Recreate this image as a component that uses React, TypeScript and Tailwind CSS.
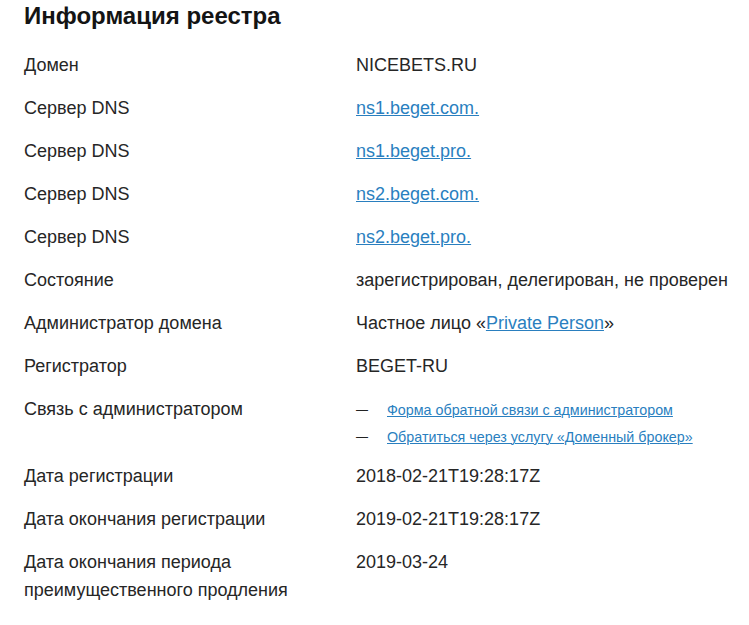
import React from "react";

const Row = ({ label, children, h = "h-[43px]" }: { label: React.ReactNode; children: React.ReactNode; h?: string }) => (
  <div className={`flex ${h}`}>
    <div className="w-[332px] shrink-0">{label}</div>
    <div className="flex-1 whitespace-nowrap">{children}</div>
  </div>
);

const L = ({ children }: { children: React.ReactNode }) => (
  <a className="text-[#2a7fbf] underline decoration-1 underline-offset-[1px]">{children}</a>
);

export default function App() {
  return (
    <div className="w-[749px] h-[625px] bg-white overflow-hidden pl-6 pt-0 text-[#262626] text-[18px] leading-[22px]" style={{ fontFamily: '"Liberation Sans", Arial, sans-serif' }}>
      <h1 className="text-[24px] font-bold leading-[30px] pt-[1px] text-[#141414] mb-[23px]">Информация реестра</h1>
      <Row label="Домен">NICEBETS.RU</Row>
      <Row label="Сервер DNS"><L>ns1.beget.com.</L></Row>
      <Row label="Сервер DNS"><L>ns1.beget.pro.</L></Row>
      <Row label="Сервер DNS"><L>ns2.beget.com.</L></Row>
      <Row label="Сервер DNS"><L>ns2.beget.pro.</L></Row>
      <Row label="Состояние">зарегистрирован, делегирован, не проверен</Row>
      <Row label="Администратор домена">
        Частное лицо «<L>Private Person</L>»
      </Row>
      <Row label="Регистратор">BEGET-RU</Row>
      <Row label="Связь с администратором" h="h-[67px]">
        <div className="flex flex-col text-[14.3px] leading-[18px] pt-[3px] gap-[9px]">
          <div className="flex items-center"><span className="w-[31px] text-[12px] text-[#222]">—</span><L>Форма обратной связи с администратором</L></div>
          <div className="flex items-center"><span className="w-[31px] text-[12px] text-[#222]">—</span><L>Обратиться через услугу «Доменный брокер»</L></div>
        </div>
      </Row>
      <Row label="Дата регистрации">2018-02-21T19:28:17Z</Row>
      <Row label="Дата окончания регистрации">2019-02-21T19:28:17Z</Row>
      <Row label={<div className="leading-[28px] -mt-[3px]">Дата окончания периода<br />преимущественного продления</div>}>2019-03-24</Row>
    </div>
  );
}
